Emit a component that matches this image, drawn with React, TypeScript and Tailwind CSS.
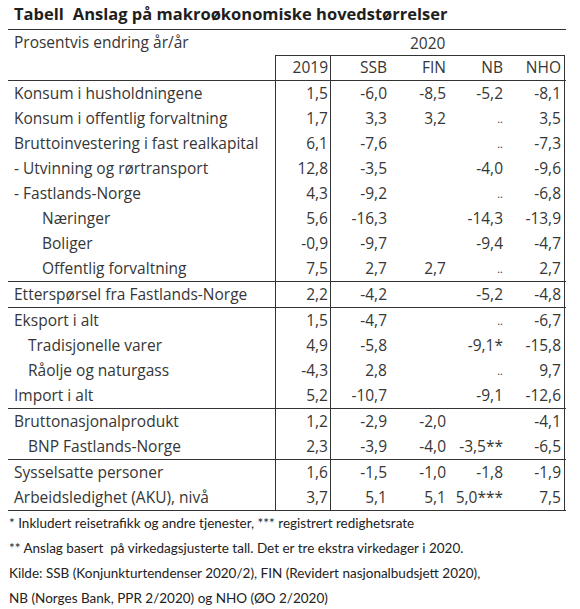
const cols = "grid grid-cols-[267px_56px_58px_58px_58px_60px]";

type Row = { label: string; indent?: 0 | 1 | 2; v: string[] };

const groups: Row[][] = [
  [
    { label: "Konsum i husholdningene", v: ["1,5", "-6,0", "-8,5", "-5,2", "-8,1"] },
    { label: "Konsum i offentlig forvaltning", v: ["1,7", "3,3", "3,2", "..", "3,5"] },
    { label: "Bruttoinvestering i fast realkapital", v: ["6,1", "-7,6", "", "..", "-7,3"] },
    { label: "- Utvinning og rørtransport", v: ["12,8", "-3,5", "", "-4,0", "-9,6"] },
    { label: "- Fastlands-Norge", v: ["4,3", "-9,2", "", "..", "-6,8"] },
    { label: "Næringer", indent: 2, v: ["5,6", "-16,3", "", "-14,3", "-13,9"] },
    { label: "Boliger", indent: 2, v: ["-0,9", "-9,7", "", "-9,4", "-4,7"] },
    { label: "Offentlig forvaltning", indent: 2, v: ["7,5", "2,7", "2,7", "..", "2,7"] },
  ],
  [{ label: "Etterspørsel fra Fastlands-Norge", v: ["2,2", "-4,2", "", "-5,2", "-4,8"] }],
  [
    { label: "Eksport i alt", v: ["1,5", "-4,7", "", "..", "-6,7"] },
    { label: "Tradisjonelle varer", indent: 1, v: ["4,9", "-5,8", "", "-9,1*", "-15,8"] },
    { label: "Råolje og naturgass", indent: 1, v: ["-4,3", "2,8", "", "..", "9,7"] },
    { label: "Import i alt", v: ["5,2", "-10,7", "", "-9,1", "-12,6"] },
  ],
  [
    { label: "Bruttonasjonalprodukt", v: ["1,2", "-2,9", "-2,0", "", "-4,1"] },
    { label: "BNP Fastlands-Norge", indent: 1, v: ["2,3", "-3,9", "-4,0", "-3,5**", "-6,5"] },
  ],
  [
    { label: "Sysselsatte personer", v: ["1,6", "-1,5", "-1,0", "-1,8", "-1,9"] },
    { label: "Arbeidsledighet (AKU), nivå", v: ["3,7", "5,1", "5,1", "5,0***", "7,5"] },
  ],
];

const indents = ["pl-[6px]", "pl-[20px]", "pl-[34px]"];
const numPad = ["pr-[2px]", "pr-[2px]", "pr-[1px]", "pr-[2px]", "pr-[3px]"];

function DataRow({ row }: { row: Row }) {
  return (
    <div className={`${cols} h-[25px] items-center`}>
      <div className={`${indents[row.indent ?? 0]} whitespace-nowrap`}>{row.label}</div>
      {row.v.map((v, i) => (
        <div
          key={i}
          className={`h-full flex items-center justify-end ${numPad[i]} ${
            i === 0 ? "border-l border-r border-[#333]" : ""
          } ${i === 4 ? "border-r border-[#333]" : ""} ${v === ".." ? "text-[11px]" : ""}`}
        >
          {v}
        </div>
      ))}
    </div>
  );
}

export default function App() {
  return (
    <div className="w-[580px] h-[609px] bg-white text-[#363636] font-['Open_Sans',sans-serif] text-[15.5px] leading-none">
      <div className="px-2">
        <div className="w-[558px]">
          <h1 className="h-[30px] pt-[6px] pl-[6px] border-b border-[#333] font-bold text-[16.5px] text-[#1e1e1e] whitespace-nowrap">
            Tabell<span className="ml-[9px]">Anslag på makroøkonomiske hovedstørrelser</span>
          </h1>
          <div className="h-[25px] flex items-center pl-[6px]">Prosentvis endring år/år</div>
          <div className="relative">
            <span className="absolute left-[402px] top-[-19px]">2020</span>
          </div>
          <div className={`${cols} h-[26px] border-b border-[#333]`}>
            <div />
            {["2019", "SSB", "FIN", "NB", "NHO"].map((h, i) => (
              <div
                key={h}
                className={`border-t border-[#333] flex items-center justify-end ${numPad[i]} ${
                  i === 0 ? "border-l border-r" : ""
                } ${i === 4 ? "border-r" : ""}`}
              >
                {h}
              </div>
            ))}
          </div>
          {groups.map((g, gi) => (
            <div key={gi} className="border-b border-[#333]">
              {g.map((r) => (
                <DataRow key={r.label} row={r} />
              ))}
            </div>
          ))}
          <div className="pl-[1px] font-['Lato',sans-serif] text-[13.5px] text-[#222]">
            {[
              "* Inkludert reisetrafikk og andre tjenester, *** registrert redighetsrate",
              "** Anslag basert  på virkedagsjusterte tall. Det er tre ekstra virkedager i 2020.",
              "Kilde: SSB (Konjunkturtendenser 2020/2), FIN (Revidert nasjonalbudsjett 2020),",
              "NB (Norges Bank, PPR 2/2020) og NHO (ØO 2/2020)",
            ].map((t) => (
              <p key={t} className="h-[25px] flex items-center whitespace-pre">
                {t}
              </p>
            ))}
          </div>
        </div>
      </div>
    </div>
  );
}
